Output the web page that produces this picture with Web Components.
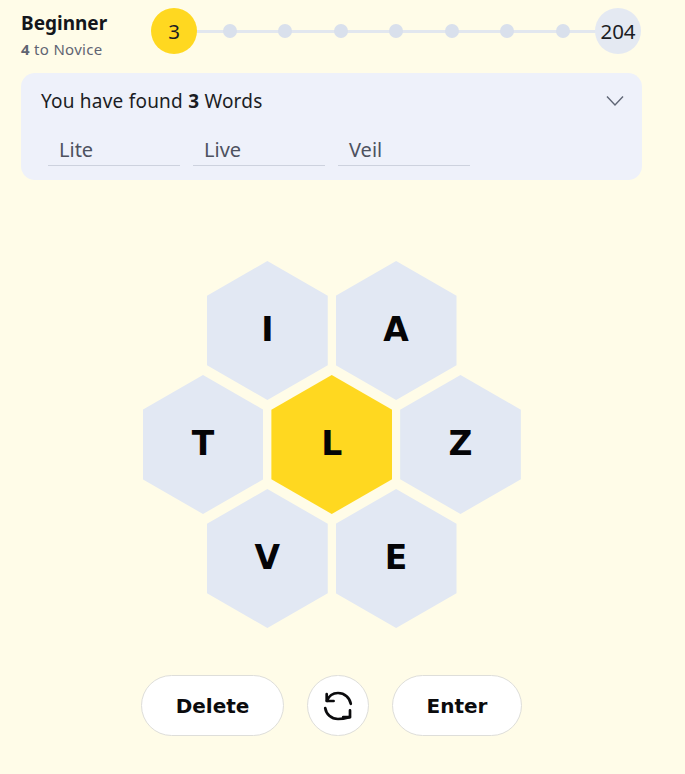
<!DOCTYPE html>
<html><head><meta charset="utf-8"><title>Spelling game</title>
<style>
html,body{margin:0;padding:0;background:#FFFCE8;}
body{font-family:"Noto Sans","Liberation Sans",sans-serif;color:#14161c;}
</style></head>
<body>
<game-page>
  <rank-bar slot="top" rank="Beginner" next="4" next-name="Novice" score="3" max="204"></rank-bar>
  <found-panel slot="top" count="3">
    <found-word>Lite</found-word><found-word>Live</found-word><found-word>Veil</found-word>
  </found-panel>
  <honey-comb slot="board">
    <comb-row><comb-cell>I</comb-cell><comb-cell>A</comb-cell></comb-row>
    <comb-row><comb-cell>T</comb-cell><comb-cell center>L</comb-cell><comb-cell>Z</comb-cell></comb-row>
    <comb-row><comb-cell>V</comb-cell><comb-cell>E</comb-cell></comb-row>
  </honey-comb>
  <action-bar slot="actions">
    <pill-button w="143">Delete</pill-button>
    <pill-button w="62" aria-label="Shuffle">
      <svg width="30" height="30" viewBox="0 0 30 30" fill="none" stroke="#0b0b0d" stroke-width="2.7" stroke-linecap="round" stroke-linejoin="round">
        <path d="M3.7 3.2V10H10.6"/>
        <path d="M4 9.8C5.8 5 10 2 15 2 21.8 2 26.8 6.8 27.8 12.8"/>
        <path d="M27 19.4V26.2H20.2"/>
        <path d="M26.8 26C24 26.8 20 28 15 28 8 28 3.2 23.2 2.2 17"/>
      </svg>
    </pill-button>
    <pill-button w="130">Enter</pill-button>
  </action-bar>
</game-page>
<script>
function def(name, css, html){
  class C extends HTMLElement{
    constructor(){super();const r=this.attachShadow({mode:'open'});
      r.innerHTML='<style>'+css+'</style>'+html;}
  }
  customElements.define(name,C);
}
def('game-page',`
  :host{display:block;width:685px;height:774px;box-sizing:border-box;padding:8px 43px 0 21px;overflow:hidden}
  .board{display:block;margin-top:81px}
  .actions{display:block;margin-top:72px}
`,`<slot name="top"></slot><div class="board"><slot name="board"></slot></div><div class="actions"><slot name="actions"></slot></div>`);

class RankBar extends HTMLElement{
  connectedCallback(){
    if(this.shadowRoot) return;
    const a=n=>this.getAttribute(n);
    const r=this.attachShadow({mode:'open'});
    const dots=Array.from({length:7},()=>'<span class="stop"><i class="dot"></i></span>').join('');
    r.innerHTML=`<style>
      :host{display:flex;height:46px;align-items:center;margin-right:1px;font-family:"Noto Sans",sans-serif}
      .rank{width:130px;flex:none;display:flex;flex-direction:column;gap:7px;padding-top:9px}
      .name{font-size:19px;line-height:20px;font-weight:700;color:#14161c}
      .next{font-size:15px;line-height:18px;color:#5f6472;letter-spacing:.3px}
      .next b{font-weight:700}
      .track{flex:1;height:46px;box-sizing:border-box;padding:0 23px;display:flex;justify-content:space-between;align-items:center;
        background:linear-gradient(#E2E7EF,#E2E7EF) center/calc(100% - 46px) 3px no-repeat}
      .stop{width:0;display:flex;justify-content:center;align-items:center}
      .dot{flex:none;width:14px;height:14px;border-radius:50%;background:#D9E0EC}
      .c{flex:none;width:46px;height:46px;border-radius:50%;display:flex;align-items:center;justify-content:center;font-size:20.5px;color:#1b1d24}
      .y{background:#FFD820}.g{background:#E4E9F2}
    </style>
    <div class="rank"><span class="name">${a('rank')}</span><span class="next"><b>${a('next')}</b> to ${a('next-name')}</span></div>
    <div class="track"><span class="stop"><span class="c y">${a('score')}</span></span>${dots}<span class="stop"><span class="c g">${a('max')}</span></span></div>`;
  }
}
customElements.define('rank-bar',RankBar);

class FoundPanel extends HTMLElement{
  connectedCallback(){
    if(this.shadowRoot) return;
    const r=this.attachShadow({mode:'open'});
    r.innerHTML=`<style>
      :host{display:block;margin-top:19px;height:107px;box-sizing:border-box;background:#EEF1FA;border-radius:14px;padding:15px 18px 0 20px;font-family:"Noto Sans",sans-serif}
      .head{display:flex;justify-content:space-between;align-items:center;height:26px;font-size:19px;letter-spacing:.22px;color:#1b1d24}
      b{font-weight:700}
      .list{display:flex;gap:13px;margin:21px 0 0 7px}
      svg{display:block}
    </style>
    <div class="head"><span>You have found <b>${this.getAttribute('count')}</b> Words</span>
      <svg width="18" height="12" viewBox="0 0 18 12" fill="none" stroke="#5f6675" stroke-width="1.4"><path d="M1 1.5 9 10 17 1.5"/></svg></div>
    <div class="list"><slot></slot></div>`;
  }
}
customElements.define('found-panel',FoundPanel);

def('found-word',`
  :host{display:block;width:132px;height:31px;box-sizing:border-box;padding-left:11px;border-bottom:1px solid #CDD2DE;font-size:20px;line-height:30px;color:#4d5260}
`,`<slot></slot>`);

def('honey-comb',`:host{display:flex;flex-direction:column;align-items:center;width:621px;margin-left:.25px}`,`<slot></slot>`);
def('comb-row',`:host{display:flex;gap:8px;height:139px;margin-bottom:-25px}`,`<slot></slot>`);

class CombCell extends HTMLElement{
  connectedCallback(){
    if(this.shadowRoot) return;
    const r=this.attachShadow({mode:'open'});
    r.innerHTML=`<style>
      :host{display:flex;align-items:center;justify-content:center;width:120.75px;height:139px;box-sizing:border-box;padding-bottom:2px;
        clip-path:polygon(50% 0,100% 25%,100% 75%,50% 100%,0 75%,0 25%);
        background:${this.hasAttribute('center')?'#FFD820':'#E2E8F3'};
        font-family:"DejaVu Sans",sans-serif;font-weight:700;font-size:33px;color:#050507}
    </style><slot></slot>`;
  }
}
customElements.define('comb-cell',CombCell);

def('action-bar',`:host{display:flex;justify-content:center;gap:23px;width:621px}`,`<slot></slot>`);
class PillButton extends HTMLElement{
  connectedCallback(){
    if(this.shadowRoot) return;
    const r=this.attachShadow({mode:'open'});
    r.innerHTML=`<style>
      :host{display:flex;align-items:center;justify-content:center;width:${this.getAttribute('w')}px;height:61px;box-sizing:border-box;
        background:#fff;border:1px solid #DEDEDA;border-radius:31px;
        font-family:"DejaVu Sans",sans-serif;font-weight:700;font-size:20px;color:#0b0b0d}
    </style><slot></slot>`;
  }
}
customElements.define('pill-button',PillButton);
</script>
</body></html>
